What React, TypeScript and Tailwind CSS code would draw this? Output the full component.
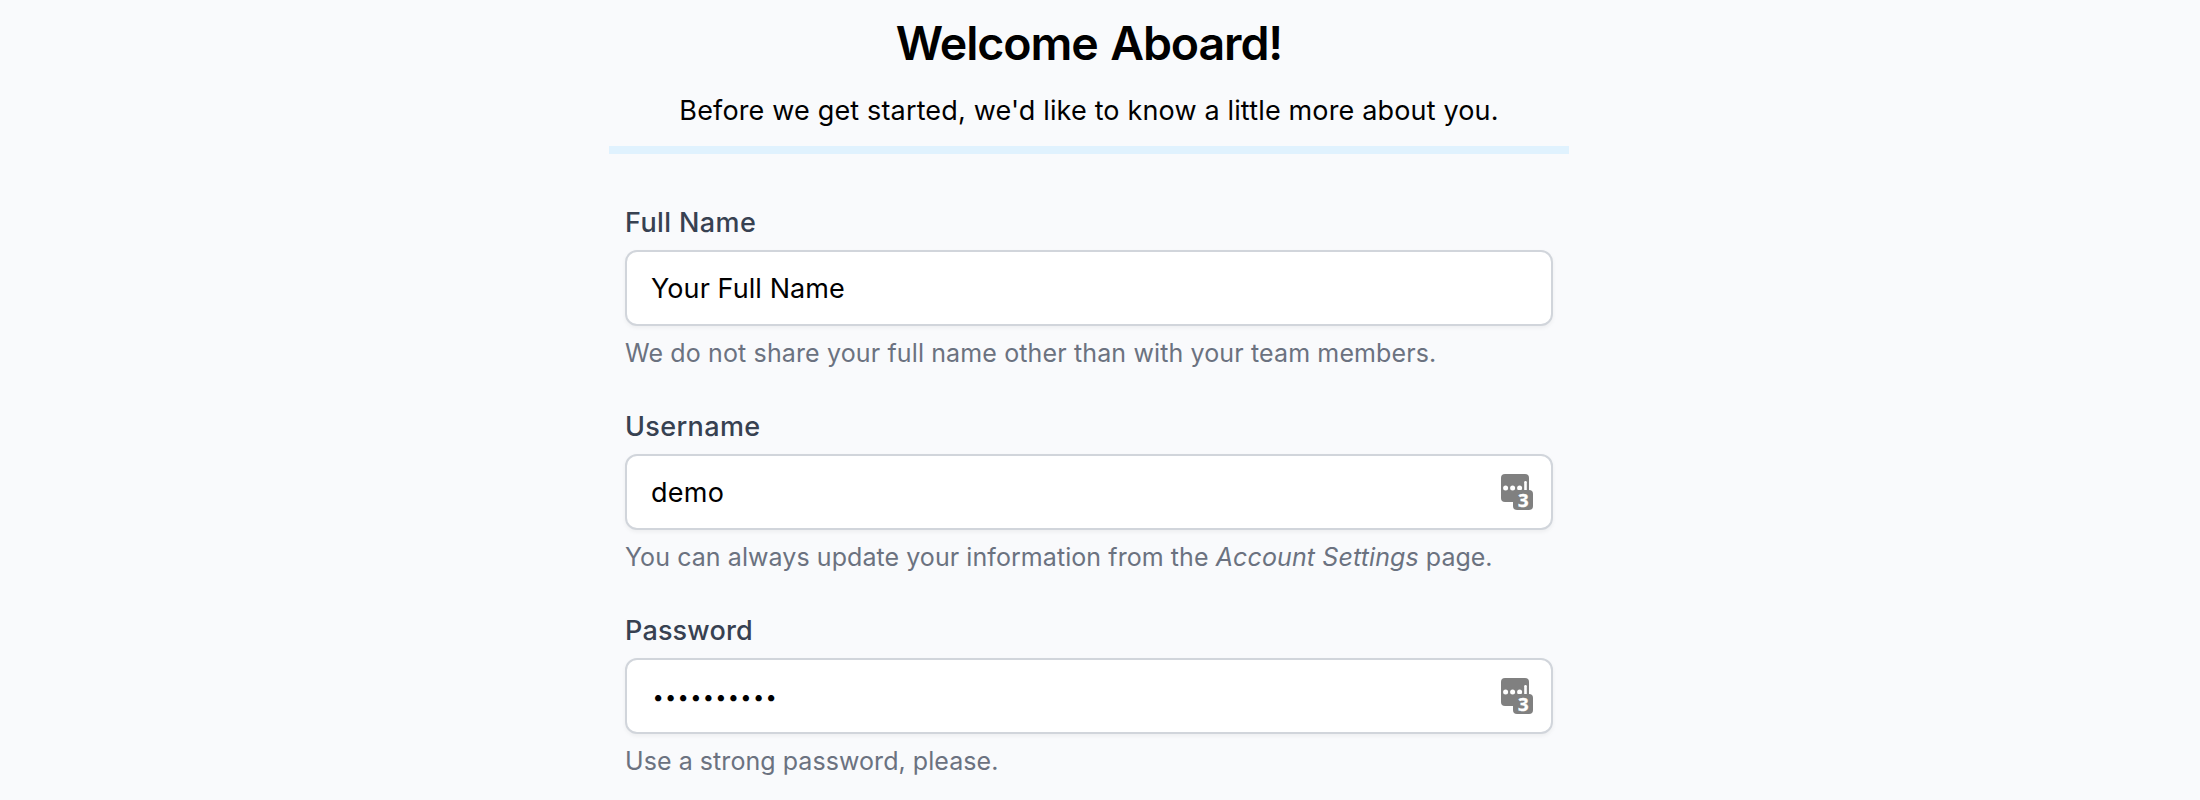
import type { ReactNode } from "react";

function PasswordManagerIcon() {
  return (
    <svg width="32" height="36" viewBox="0 0 32 36" className="shrink-0 overflow-visible" aria-hidden="true">
      <rect x="0" y="0" width="28" height="28" rx="4" fill="#808080" />
      <circle cx="4.6" cy="14" r="2.5" fill="#fff" />
      <circle cx="11.6" cy="14" r="2.5" fill="#fff" />
      <circle cx="18.6" cy="14" r="2.5" fill="#fff" />
      <rect x="23.2" y="7" width="2.6" height="12" rx="1.2" fill="#fff" />
      <rect x="12" y="16" width="20" height="20" rx="4" fill="#808080" />
      <text
        x="22.4"
        y="33.4"
        textAnchor="middle"
        fill="#fff"
        stroke="#fff"
        strokeWidth="0.4"
        fontFamily="'Open Sans', sans-serif"
        fontWeight="700"
        fontSize="18.5"
      >
        3
      </text>
    </svg>
  );
}

type FieldProps = {
  label: string;
  labelClass: string;
  help: ReactNode;
  icon?: boolean;
  children: ReactNode;
};

function Field({ label, labelClass, help, icon, children }: FieldProps) {
  return (
    <div className="flex flex-col">
      <label className={`pt-px text-[27px] leading-10 font-medium text-[#374151] ${labelClass}`}>{label}</label>
      <div className="mt-[7px] flex h-[76px] items-center justify-between rounded-xl border-2 border-[#d1d5db] bg-white pr-[18px] pl-6 text-[27px] leading-10 text-black shadow-[0_2px_4px_rgba(0,0,0,0.05)]">
        {children}
        {icon && <PasswordManagerIcon />}
      </div>
      <p className="mt-[7px] text-[25px] leading-10 whitespace-nowrap text-[#6b7280]">{help}</p>
    </div>
  );
}

export default function App() {
  return (
    <div className="h-[800px] w-full overflow-hidden bg-[#f9fafc] font-['Inter',sans-serif] text-black">
      <main className="ml-[609px] w-[960px] pt-[15px]">
        <header className="border-b-8 border-[#e0f2fe] pb-[15px] text-center">
          <h1 className="text-[46.5px] leading-[56px] font-semibold tracking-[-1.1px] [word-spacing:2px]">Welcome Aboard!</h1>
          <p className="mt-5 text-[27px] leading-10 tracking-[0.158px]">
            Before we get started, we'd like to know a little more about you.
          </p>
        </header>
        <form className="mt-12 flex flex-col gap-[33px] px-4">
          <Field
            label="Full Name"
            labelClass="tracking-[0.4px]"
            help={
              <span className="tracking-[0.13px]">
                We do not share your full name other than with your team members.
              </span>
            }
          >
            <span className="pt-[2px] tracking-[0.08px]">Your Full Name</span>
          </Field>
          <Field
            label="Username"
            labelClass="tracking-[0.36px]"
            icon
            help={
              <>
                <span className="tracking-[0.07px]">You can always update your information from the </span>
                <em className="tracking-[0.12px]">Account Settings</em>
                <span> page.</span>
              </>
            }
          >
            <span className="pt-[2px] tracking-[0.3px]">demo</span>
          </Field>
          <Field
            label="Password"
            labelClass="tracking-[0.18px]"
            icon
            help={<span className="tracking-[0.06px]">Use a strong password, please.</span>}
          >
            <span className="pt-[1px] pl-[1.5px] text-[20px] tracking-[1.3px]">••••••••••</span>
          </Field>
        </form>
      </main>
    </div>
  );
}
